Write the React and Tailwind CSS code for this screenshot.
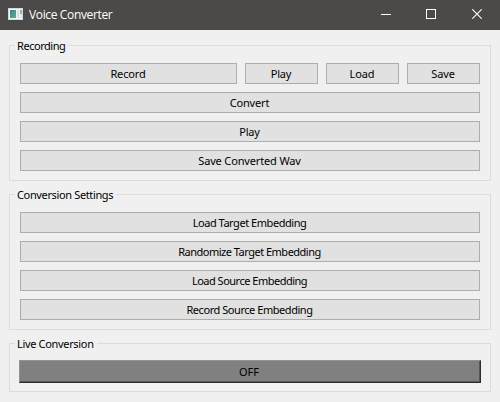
import React from 'react';

function Button({ children, className = 'w-full', spacing = 'tracking-[-0.15px]' }) {
  return (
    <button
      className={`flex h-[21px] items-center justify-center border border-[#adadad] bg-[#e1e1e1] pr-[1px] leading-[19px] whitespace-nowrap ${spacing} ${className}`}
    >
      {children}
    </button>
  );
}

function Group({ title, className, spacing, children }) {
  return (
    <section className={`flex flex-col border border-[#dcdcdc] px-[10px] ${className}`}>
      <h2 className={`-mt-[8px] -ml-[5px] h-[15px] self-start bg-[#f0f0f0] pr-[3px] pl-[2px] leading-[15px] whitespace-nowrap ${spacing}`}>
        {title}
      </h2>
      {children}
    </section>
  );
}

function TitleBar() {
  return (
    <header className="flex h-[30px] items-center bg-[#4c4a48] pl-2 text-white">
      <svg width="15" height="12" viewBox="0 0 15 12" className="mt-[-2px] shrink-0" shapeRendering="crispEdges">
        <defs>
          <linearGradient id="pane" x1="0" y1="0" x2="1" y2="1">
            <stop offset="0" stopColor="#3f78b0" />
            <stop offset="1" stopColor="#5cb86a" />
          </linearGradient>
        </defs>
        <rect width="15" height="12" fill="#d3dade" />
        <rect x="1" y="1" width="13" height="10" fill="#f4f5f6" />
        <rect x="2" y="2" width="6" height="8" fill="url(#pane)" />
        <rect x="9" y="2" width="2" height="8" fill="#dedfe3" />
        <rect x="12" y="2" width="2" height="4" fill="#86b9a8" />
        <rect x="12" y="6" width="2" height="4" fill="#e6e7e8" />
      </svg>
      <h1 className="ml-[6px] font-['Open_Sans','Noto_Sans',sans-serif] text-[12px] leading-none tracking-[-0.36px]">Voice Converter</h1>
      <div className="ml-auto flex h-full">
        <button className="flex w-[45px] items-center justify-center pb-[2px]" aria-label="Minimize">
          <svg width="10" height="10" shapeRendering="crispEdges"><rect y="5" width="10" height="1" fill="#fff" /></svg>
        </button>
        <button className="flex w-[46px] items-center justify-center pb-[2px]" aria-label="Maximize">
          <svg width="10" height="10" shapeRendering="crispEdges"><rect x="0.5" y="0.5" width="9" height="9" fill="none" stroke="#fff" /></svg>
        </button>
        <button className="flex w-[46px] items-center justify-center pb-[2px]" aria-label="Close">
          <svg width="10" height="10"><path d="M0.3 0.3L9.7 9.7M9.7 0.3L0.3 9.7" stroke="#fff" strokeWidth="1.1" /></svg>
        </button>
      </div>
    </header>
  );
}

export default function App() {
  return (
    <div className="h-[402px] w-[500px] overflow-hidden bg-[#f0f0f0] font-['Noto_Sans',sans-serif] text-[11px] text-black">
      <TitleBar />
      <main className="flex flex-col gap-[13px] px-[9px] pt-[15px]">
        <Group title="Recording" className="h-[136px]" spacing="tracking-[-0.45px]">
          <div className="mt-[10px] flex flex-col gap-2">
            <div className="flex gap-2">
              <Button className="w-[217px]">Record</Button>
              <Button className="w-[73px]">Play</Button>
              <Button className="w-[73px]">Load</Button>
              <Button className="w-[73px]">Save</Button>
            </div>
            <Button>Convert</Button>
            <Button>Play</Button>
            <Button spacing="tracking-[-0.15px]">Save Converted Wav</Button>
          </div>
        </Group>
        <Group title="Conversion Settings" className="h-[136px]" spacing="tracking-[-0.36px]">
          <div className="mt-[10px] flex flex-col gap-2">
            <Button spacing="tracking-[-0.45px]">Load Target Embedding</Button>
            <Button spacing="tracking-[-0.5px]">Randomize Target Embedding</Button>
            <Button spacing="tracking-[-0.5px]">Load Source Embedding</Button>
            <Button spacing="tracking-[-0.45px]">Record Source Embedding</Button>
          </div>
        </Group>
        <Group title="Live Conversion" className="h-[49px]" spacing="tracking-[-0.33px]">
          <button className="-mx-px mt-[9px] flex h-[23px] items-center justify-center border border-t-[#929292] border-r-[#2c2c2c] border-b-[#2c2c2c] border-l-[#929292] bg-[#808080] pr-[2px] leading-none shadow-[inset_-1px_-1px_0_#565656]">
            OFF
          </button>
        </Group>
      </main>
    </div>
  );
}
